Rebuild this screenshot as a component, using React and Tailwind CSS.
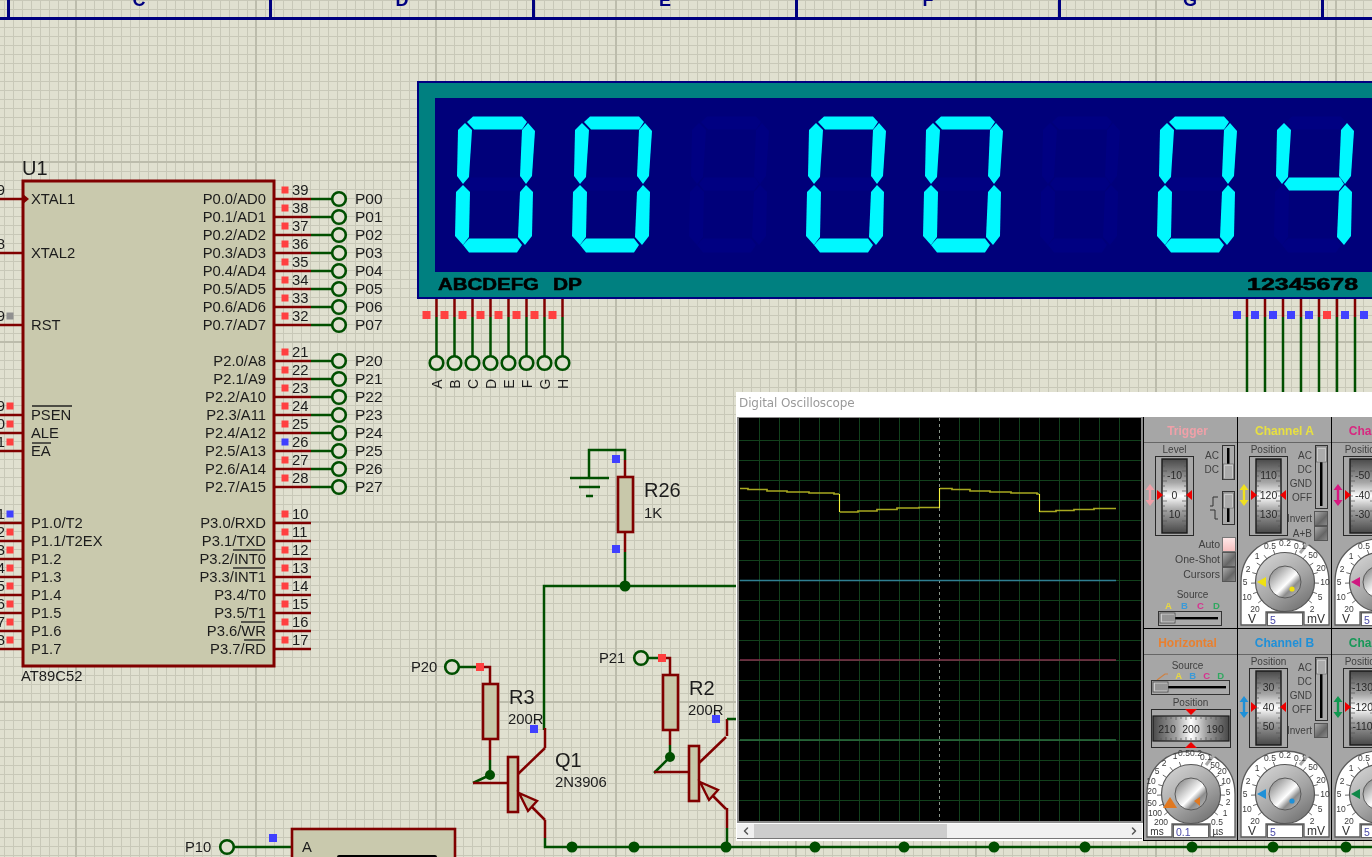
import { ChevronLeft, ChevronRight } from "lucide-react";

const MAROON = "#800000";
const GREEN = "#004f00";

const SEG = {
  a: "11,5 17,-0.5 66,-0.5 71,5 66,12.5 18,12.5",
  f: "9,6 16,13 13,60 7,67 1,59 2,13",
  b: "72,6 79,14 76,59 70,67 64,59 66,13",
  g: "9,67 14,60.5 65,60.5 69,67 64,73.5 14,73.5",
  e: "7,68 14,75 13,120 7,128 -1,119 0,75",
  c: "70,68 77,75 76,119 69,128 62,120 64,75",
  d: "7,128 13,121.5 61,121.5 66,128 61,135.5 13,135.5",
};

const left = [
  { y: 199, t: "XTAL1", n: "19" },
  { y: 253, t: "XTAL2", n: "18" },
  { y: 325, t: "RST", n: "9", c: "#909090" },
  { y: 415, t: "PSEN", n: "29", c: "#ff4040" },
  { y: 433, t: "ALE", n: "30", c: "#ff4040" },
  { y: 451, t: "EA", n: "31", c: "#ff4040" },
  { y: 523, t: "P1.0/T2", n: "1", c: "#4040ff" },
  { y: 541, t: "P1.1/T2EX", n: "2", c: "#ff4040" },
  { y: 559, t: "P1.2", n: "3", c: "#ff4040" },
  { y: 577, t: "P1.3", n: "4", c: "#ff4040" },
  { y: 595, t: "P1.4", n: "5", c: "#ff4040" },
  { y: 613, t: "P1.5", n: "6", c: "#ff4040" },
  { y: 631, t: "P1.6", n: "7", c: "#ff4040" },
  { y: 649, t: "P1.7", n: "8", c: "#ff4040" },
];

const right = [
  ["P0.0/AD0", 39, "P00"],
  ["P0.1/AD1", 38, "P01"],
  ["P0.2/AD2", 37, "P02"],
  ["P0.3/AD3", 36, "P03"],
  ["P0.4/AD4", 35, "P04"],
  ["P0.5/AD5", 34, "P05"],
  ["P0.6/AD6", 33, "P06"],
  ["P0.7/AD7", 32, "P07"],
  null,
  ["P2.0/A8", 21, "P20"],
  ["P2.1/A9", 22, "P21"],
  ["P2.2/A10", 23, "P22"],
  ["P2.3/A11", 24, "P23"],
  ["P2.4/A12", 25, "P24"],
  ["P2.5/A13", 26, "P25"],
  ["P2.6/A14", 27, "P26"],
  ["P2.7/A15", 28, "P27"],
  null,
  ["P3.0/RXD", 10],
  ["P3.1/TXD", 11],
  ["P3.2/INT0", 12],
  ["P3.3/INT1", 13],
  ["P3.4/T0", 14],
  ["P3.5/T1", 15],
  ["P3.6/WR", 16],
  ["P3.7/RD", 17],
];

const overlines = [
  [32, 72, 406],
  [32, 51, 443],
  [233, 265, 550],
  [233, 265, 568],
  [241, 265, 622],
  [244, 265, 640],
];

const busNodes = [572, 634, 726, 815, 904, 994, 1085, 1192, 1273, 1346];
const sheetLetters = [
  ["C", 139],
  ["D", 402],
  ["E", 665],
  ["F", 928],
  ["G", 1190],
];

function Wire({ d, c = GREEN, w = 2.5 }) {
  return <path d={d} fill="none" stroke={c} strokeWidth={w} />;
}

function Sq({ x, y, c = "#ff4040", s = 8 }) {
  return <rect x={x - s / 2} y={y - s / 2} width={s} height={s} fill={c} />;
}

function Term({ x, y }) {
  return <circle cx={x} cy={y} r="6.8" fill="#e0e0d0" stroke={GREEN} strokeWidth="2.6" />;
}

function Label({ x, y, s = 14.8, a, children }) {
  return (
    <text x={x} y={y} fontSize={s} textAnchor={a} fill="#1c1c1c">
      {children}
    </text>
  );
}

function Resistor({ x, y }) {
  return <rect x={x - 7} y={y} width={15} height={55} fill="#c8c8aa" stroke={MAROON} strokeWidth="2.6" />;
}

function Transistor({ x, y }) {
  // x,y = top left of the body
  return (
    <g>
      <Wire c={MAROON} d={`M${x + 10} ${y + 17}L${x + 37} ${y - 9}`} />
      <Wire c={MAROON} d={`M${x - 35} ${y + 26}H${x}`} />
      <Wire c={MAROON} d={`M${x + 24} ${y + 50}L${x + 37} ${y + 63}`} />
      <rect x={x} y={y} width={10} height={55} fill="#c8c8aa" stroke={MAROON} strokeWidth="2.6" />
      <polygon
        points={`${x + 11},${y + 36} ${x + 29},${y + 44} ${x + 20},${y + 54}`}
        fill="#c8c8aa"
        stroke={MAROON}
        strokeWidth="2.4"
      />
    </g>
  );
}

function Schematic() {
  return (
    <svg className="absolute left-0 top-0" width="1372" height="857" viewBox="0 0 1372 857">
      {/* sheet border */}
      <rect x="0" y="17" width="1372" height="3" fill="#000080" />
      {[8, 270, 533, 796, 1059, 1322].map((x) => (
        <rect key={x} x={x - 1} y="0" width="3" height="18" fill="#000080" />
      ))}
      {sheetLetters.map(([t, x]) => (
        <text key={t} x={x} y="6" fontSize="18" fontWeight="700" textAnchor="middle" fill="#000080">
          {t}
        </text>
      ))}

      {/* U1 */}
      {left.map((p) => (
        <g key={p.t}>
          <Wire c={MAROON} d={`M0 ${p.y}H23`} />
          <Label x={5} y={p.y - 4} a="end">
            {p.n}
          </Label>
          {p.c && <Sq x={10} y={p.y - 9} c={p.c} s={7} />}
        </g>
      ))}
      <rect x="23" y="181" width="251" height="485" fill="#c9c9ad" stroke={MAROON} strokeWidth="3" />
      <polygon points="23,194 29,199 23,204" fill={MAROON} />
      <Label x={22} y={175} s={20}>
        U1
      </Label>
      <Label x={21} y={681}>
        AT89C52
      </Label>
      {left.map((p) => (
        <Label key={p.t} x={31} y={p.y + 5}>
          {p.t}
        </Label>
      ))}
      {right.map((p, i) => {
        if (!p) return null;
        const y = 199 + i * 18;
        return (
          <g key={p[0]}>
            <Label x={266} y={y + 5} a="end">
              {p[0]}
            </Label>
            <Wire c={MAROON} d={`M274 ${y}H311`} />
            <Sq x={285} y={y - 9} s={7} c={p[1] === 26 ? "#4040ff" : "#ff4040"} />
            <Label x={292} y={y - 4}>
              {p[1]}
            </Label>
            {p[2] && (
              <>
                <Wire d={`M311 ${y}H333`} />
                <Term x={339} y={y} />
                <Label x={355} y={y + 5} s={15.5}>
                  {p[2]}
                </Label>
              </>
            )}
          </g>
        );
      })}
      {overlines.map(([a, b, y]) => (
        <path key={y} d={`M${a} ${y}H${b}`} stroke="#222" strokeWidth="1.4" />
      ))}

      {/* display pins */}
      {"ABCDEFGH".split("").map((t, i) => {
        const x = 436.5 + i * 18;
        return (
          <g key={t}>
            <Wire c={MAROON} d={`M${x} 298V317`} />
            <Wire d={`M${x} 317V357`} />
            <Sq x={x - 10} y={315} />
            <Term x={x} y={363} />
            <text x={x + 5} y="384" fontSize="14" textAnchor="middle" fill="#1c1c1c" transform={`rotate(-90 ${x + 5} 384)`}>
              {t}
            </text>
          </g>
        );
      })}
      {[1247, 1265, 1283, 1301, 1319, 1337, 1355].map((x, i) => (
        <g key={x}>
          <Wire c={MAROON} d={`M${x} 298V317`} />
          <Wire d={`M${x} 317V392`} />
          <Sq x={x - 10} y={315} c={i === 5 ? "#ff4040" : "#4040ff"} />
        </g>
      ))}
      <Sq x={1364} y={315} c="#4040ff" />

      {/* R26 */}
      <Wire d="M625 460V450H589V478" />
      <Wire d="M570 478H609" />
      <Wire d="M579 487H600" />
      <Wire d="M586 496H593" />
      <Wire c={MAROON} d="M625 460V477" />
      <Wire c={MAROON} d="M625 532V552" />
      <Resistor x={625} y={477} />
      <Wire d="M625 552V586M740 586H544V730" />
      <circle cx="625" cy="586" r="5.5" fill={GREEN} />
      <Sq x={616} y={459} c="#4040ff" />
      <Sq x={616} y={549} c="#4040ff" />
      <Label x={644} y={497} s={20}>
        R26
      </Label>
      <Label x={644} y={518}>
        1K
      </Label>

      {/* Q1 */}
      <Term x={452} y={667} />
      <Label x={411} y={672}>
        P20
      </Label>
      <Wire d="M459 667H482" />
      <Wire c={MAROON} d="M482 667H490V684M490 739V760" />
      <Sq x={480} y={667} />
      <Resistor x={490} y={684} />
      <Wire d="M490 760V775L473 783" />
      <circle cx="490" cy="775" r="5" fill={GREEN} />
      <Wire c={MAROON} d="M545 728V748" />
      <Wire c={MAROON} d="M545 820V838" />
      <Transistor x={508} y={757} />
      <Sq x={534} y={729} c="#4040ff" />
      <Label x={509} y={704} s={20}>
        R3
      </Label>
      <Label x={508} y={724}>
        200R
      </Label>
      <Label x={555} y={767} s={20}>
        Q1
      </Label>
      <Label x={555} y={787}>
        2N3906
      </Label>

      {/* Q2 */}
      <Term x={641} y={658} />
      <Label x={599} y={663}>
        P21
      </Label>
      <Wire d="M648 658H662" />
      <Wire c={MAROON} d="M662 658H670V675M670 730V745" />
      <Sq x={662} y={658} />
      <Resistor x={670} y={675} />
      <Wire d="M670 745V757L654 773" />
      <circle cx="670" cy="757" r="5" fill={GREEN} />
      <Wire c={MAROON} d="M727 736V719" />
      <Wire d="M727 719H740" />
      <Wire c={MAROON} d="M727 808V828" />
      <Transistor x={689} y={746} />
      <Sq x={716} y={719} c="#4040ff" />
      <Label x={689} y={695} s={20}>
        R2
      </Label>
      <Label x={688} y={715}>
        200R
      </Label>

      {/* bus along the bottom */}
      <Wire d="M545 838V847H1372M727 828V847" />
      {busNodes.map((x) => (
        <circle key={x} cx={x} cy="847" r="5.5" fill={GREEN} />
      ))}

      {/* lower chip */}
      <Wire d="M234 847H292" c={GREEN} />
      <Term x={227} y={847} />
      <Label x={185} y={852}>
        P10
      </Label>
      <Sq x={273} y={838} c="#4040ff" />
      <rect x="292" y="829" width="163" height="40" fill="#c9c9ad" stroke={MAROON} strokeWidth="2.6" />
      <Label x={302} y={852}>
        A
      </Label>
      <rect x="337" y="855" width="100" height="10" rx="2" fill="#000" />
    </svg>
  );
}

function Digit({ on }) {
  return (
    <svg width="117" height="140" viewBox="0 0 117 140" className="shrink-0 overflow-visible">
      {Object.entries(SEG).map(([k, pts]) => (
        <polygon key={k} points={pts} fill={on.includes(k) ? "#00f8ff" : "#000082"} />
      ))}
    </svg>
  );
}

function Display() {
  const digits = ["abcdef", "abcdef", "", "abcdef", "abcdef", "", "abcdef", "fgbc"];
  return (
    <div className="absolute left-[417px] top-[81px] h-[218px] w-[1000px] border-[2px] border-[#000080] bg-[#008080]">
      <div className="ml-[16px] mt-[15px] flex h-[174px] bg-[#00007a] pl-[21px] pt-[19px]">
        {digits.map((d, i) => (
          <Digit key={i} on={d} />
        ))}
      </div>
      <svg width="1000" height="26" className="block">
        <g fontSize="16" fontWeight="700" fill="#000" stroke="#000" strokeWidth="0.5">
          <text x="19" y="18" textLength="101" lengthAdjust="spacingAndGlyphs">
            ABCDEFG
          </text>
          <text x="134" y="18" textLength="29" lengthAdjust="spacingAndGlyphs">
            DP
          </text>
          <text x="828" y="18" textLength="111" lengthAdjust="spacingAndGlyphs">
            12345678
          </text>
        </g>
      </svg>
    </div>
  );
}

function ScopeScreen() {
  const vs = Array.from({ length: 19 }, (_, i) => 20 + i * 20);
  const hs = Array.from({ length: 19 }, (_, i) => 22 + i * 20);
  const pts = [
    "1,70.5 9,70.5 9,71.5 28,71.5 28,73 48,73 48,74 70,74 70,75 95,75 95,76 100,76",
    "101,94 119,94 119,93 138,93 138,91.5 158,91.5 158,90 180,90 180,89.5 201,89.5",
    "201,70.5 213,70.5 213,71.5 231,71.5 231,73 251,73 251,74 272,74 272,75 298,75 298,76 300,76",
    "301,93.5 317,93.5 317,92.5 335,92.5 335,91.5 355,91.5 355,90.5 377,90.5",
  ];
  return (
    <svg width="402" height="403" viewBox="0 0 402 403" className="block bg-black">
      {vs.map((x) =>
        x === 200 ? null : <path key={x} d={`M${x + 0.5} 0V403`} stroke="#12401c" strokeWidth="1" />
      )}
      {hs.map((y) => (
        <path key={y} d={`M0 ${y + 0.5}H402`} stroke="#12401c" strokeWidth="1" />
      ))}
      <path d="M200.5 0V403" stroke="#b8c8b8" strokeWidth="1" strokeDasharray="3 3" opacity="0.75" />
      <path d="M1 162.5H377" stroke="#2f7f92" strokeWidth="1.5" />
      <path d="M1 242H377" stroke="#85304c" strokeWidth="1.5" />
      <path d="M1 322H377" stroke="#2c7040" strokeWidth="1.5" />
      {pts.map((p, i) => (
        <polyline key={i} points={p} fill="none" stroke="#a8a820" strokeWidth="1.7" />
      ))}
      <path d="M100.5 76V94M200.5 70V90M300.5 76V94" stroke="#f4f440" strokeWidth="1.1" />
    </svg>
  );
}

function Drum({ vals }) {
  return (
    <svg width="39" height="80" viewBox="0 0 39 80" className="block">
      <defs>
        <linearGradient id="drumV" x1="0" x2="0" y1="0" y2="1">
          <stop offset="0" stopColor="#4a4a4a" />
          <stop offset="0.32" stopColor="#a8a8a8" />
          <stop offset="0.5" stopColor="#ffffff" />
          <stop offset="0.7" stopColor="#a0a0a0" />
          <stop offset="1" stopColor="#484848" />
        </linearGradient>
      </defs>
      <rect x="0.5" y="0.5" width="38" height="79" fill="#a8a8a8" stroke="#2a2a2a" />
      <rect x="7" y="3" width="25" height="74" fill="url(#drumV)" stroke="#1a1a1a" strokeWidth="1.4" />
      {[...Array(15)].map((_, i) => (
        <g key={i} stroke="#555" strokeWidth="0.7">
          <path d={`M8 ${5 + i * 5}h${i % 2 ? 2 : 4}M31 ${5 + i * 5}h-${i % 2 ? 2 : 4}`} />
        </g>
      ))}
      {vals.map((v, i) => (
        <text key={v} x="19.5" y={23 + i * 19.5} fontSize="10.5" textAnchor="middle" fill="#2a2a2a">
          {v}
        </text>
      ))}
      <polygon points="2,34 8,39 2,44" fill="#ee0000" />
      <polygon points="37,34 31,39 37,44" fill="#ee0000" />
    </svg>
  );
}

function HDrum() {
  return (
    <svg width="80" height="39" viewBox="0 0 80 39" className="block">
      <defs>
        <linearGradient id="drumH" x1="0" x2="1" y1="0" y2="0">
          <stop offset="0" stopColor="#4a4a4a" />
          <stop offset="0.32" stopColor="#a8a8a8" />
          <stop offset="0.5" stopColor="#ffffff" />
          <stop offset="0.7" stopColor="#a0a0a0" />
          <stop offset="1" stopColor="#484848" />
        </linearGradient>
      </defs>
      <rect x="0.5" y="0.5" width="79" height="38" fill="#a8a8a8" stroke="#2a2a2a" />
      <rect x="2" y="7" width="76" height="25" fill="url(#drumH)" stroke="#1a1a1a" strokeWidth="1.2" />
      {[...Array(15)].map((_, i) => (
        <path key={i} d={`M${5 + i * 5} 8v${i % 2 ? 2 : 3}M${5 + i * 5} 31v-${i % 2 ? 2 : 3}`} stroke="#555" strokeWidth="0.7" />
      ))}
      {["210", "200", "190"].map((v, i) => (
        <text key={v} x={16 + i * 24} y="23.5" fontSize="10.5" textAnchor="middle" fill="#2a2a2a">
          {v}
        </text>
      ))}
      <polygon points="34,0 46,0 40,6" fill="#ee0000" />
      <polygon points="34,39 46,39 40,33" fill="#ee0000" />
    </svg>
  );
}

function VArrow({ c }) {
  return (
    <svg width="10" height="24" viewBox="0 0 10 24" className="block">
      <path d="M5 1L9.5 7H6.2V17H9.5L5 23L.5 17H3.8V7H.5Z" fill={c} />
    </svg>
  );
}

function VSlider({ h, up = false }) {
  return (
    <svg width="13" height={h} viewBox={`0 0 13 ${h}`} className="block shrink-0">
      <rect x="0.5" y="0.5" width="12" height={h - 1} fill="#aaa" stroke="#333" />
      <rect x="5" y="3" width="2.5" height={h - 6} fill="#000" />
      <g transform={`translate(0 ${up ? 1 : h - 17})`}>
        <rect x="1.5" y="1" width="10" height="15" fill="#c8c8c8" stroke="#666" strokeWidth="0.7" />
        {[4, 6, 8, 10, 12, 14].map((y) => (
          <path key={y} d={`M3 ${y}H10`} stroke="#777" strokeWidth="0.7" />
        ))}
      </g>
    </svg>
  );
}

function HSlider({ w }) {
  return (
    <svg width={w} height="15" viewBox={`0 0 ${w} 15`} className="block">
      <rect x="0.5" y="0.5" width={w - 1} height="14" fill="#aaa" stroke="#333" />
      <rect x="4" y="6" width={w - 8} height="2.4" fill="#000" />
      <rect x="2" y="2" width="15" height="10" fill="#ccc" stroke="#444" strokeWidth="0.8" />
      {[5, 7, 9, 11, 13, 15].map((x) => (
        <path key={x} d={`M${x} 3.5V10.5`} stroke="#444" strokeWidth="0.8" />
      ))}
    </svg>
  );
}

function Btn({ pink }) {
  return (
    <div
      className={
        pink
          ? "h-[15px] w-[14px] shrink-0 border border-[#777] bg-[linear-gradient(to_bottom,#ffe8e8,#f8c0c0)]"
          : "h-[15px] w-[14px] shrink-0 border border-[#555] bg-[linear-gradient(135deg,#aaa,#666_60%,#888)]"
      }
    />
  );
}

const vScale = [
  ["0.5", 30, 11],
  ["0.2", 45, 8],
  ["0.1", 60, 11],
  ["1", 17, 21],
  ["2", 8, 34],
  ["5", 5, 47],
  ["10", 7, 62],
  ["20", 15, 74],
  ["50", 73, 20],
  ["20", 81, 33],
  ["10", 85, 47],
  ["5", 80, 62],
  ["2", 72, 74],
];

const tScale = [
  ["1", 29, 9],
  ["0.5", 38, 6],
  ["0.2", 50, 6],
  ["0.1", 60, 10],
  ["2", 18, 16],
  ["5", 11, 24],
  ["10", 5, 34],
  ["20", 6, 44],
  ["50", 6, 56],
  ["100", 9, 66],
  ["200", 15, 75],
  ["50", 69, 18],
  ["20", 76, 24],
  ["10", 80, 34],
  ["5", 82, 45],
  ["2", 82, 55],
  ["1", 79, 66],
  ["0.5", 71, 75],
];

function Knob({ color, value, scale = vScale, units = ["V", "mV"], time }) {
  const ticks = [-128, -110, -92, -74, -56, -38, -20, 20, 38, 56, 74, 92, 110, 128];
  return (
    <svg width="90" height="88" viewBox="0 0 90 88" className="block">
      <defs>
        <linearGradient id="knobBody" x1="0.15" y1="0" x2="0.85" y2="1">
          <stop offset="0" stopColor="#d4d4d4" />
          <stop offset="0.55" stopColor="#a4a4a4" />
          <stop offset="1" stopColor="#6e6e6e" />
        </linearGradient>
        <linearGradient id="knobCap" x1="0" y1="0" x2="1" y2="1">
          <stop offset="0" stopColor="#6e6e6e" />
          <stop offset="0.4" stopColor="#d8d8d8" />
          <stop offset="0.55" stopColor="#ffffff" />
          <stop offset="0.7" stopColor="#8c8c8c" />
          <stop offset="1" stopColor="#c8c8c8" />
        </linearGradient>
      </defs>
      <path
        d="M1 87V44C1 18 20 1 45 1C70 1 89 18 89 44V87H64V74H26V87Z"
        fill="#fff"
        stroke="#5a5a5a"
        strokeWidth="1.3"
      />
      <path d="M60 15L68 5" stroke="#a8a8a8" strokeWidth="3" />
      {ticks.map((a) => {
        const r = (a * Math.PI) / 180;
        return (
          <path
            key={a}
            d={`M${45 + 29 * Math.sin(r)} ${44 - 29 * Math.cos(r)}L${45 + 34 * Math.sin(r)} ${44 - 34 * Math.cos(r)}`}
            stroke="#444"
            strokeWidth="0.8"
          />
        );
      })}
      {scale.map(([t, x, y], i) => (
        <text key={i} x={x} y={y} fontSize="8.5" textAnchor="middle" fill="#3c3c3c">
          {t}
        </text>
      ))}
      <text x={time ? 11 : 12} y="85" fontSize={time ? 10 : 12} textAnchor="middle" fill="#333">
        {units[0]}
      </text>
      <text x={time ? 72 : 76} y="85" fontSize={time ? 10 : 12} textAnchor="middle" fill="#333">
        {units[1]}
      </text>
      <circle cx="45" cy="44" r="29.5" fill="url(#knobBody)" stroke="#555" strokeWidth="1.2" />
      <circle cx="45" cy="44" r="16" fill="url(#knobCap)" stroke="#5a5a5a" strokeWidth="1" />
      {time ? (
        <>
          <polygon points="24,47 31,58 17,58" fill={color} />
          <polygon points="54,47 48,51 54,56" fill={color} />
        </>
      ) : (
        <>
          <polygon points="17,44 26,39 26,49" fill={color} />
          <circle cx="52" cy="51" r="2.6" fill={color} />
        </>
      )}
      <rect x="27.5" y="75" width="35" height="12.5" fill="#fff" stroke="#444" strokeWidth="0.8" />
      <text x="30" y="85.5" fontSize="10.5" fill="#4a4aa8">
        {value}
      </text>
    </svg>
  );
}

function Title({ c, children }) {
  return (
    <div className={`flex h-[26px] shrink-0 items-center justify-center border-b border-[#666] pt-[2px] text-[12px] font-bold ${c}`}>
      {children}
    </div>
  );
}

function Channel({ title, titleClass, arrow, vals, knob, aPlusB }) {
  return (
    <div className="flex h-[212px] w-[94px] shrink-0 flex-col border-r border-b border-black bg-[#a6a6a6] text-[10px] leading-none text-[#404040]">
      <Title c={titleClass}>{title}</Title>
      <div className="flex h-[95px]">
        <div className="flex w-[11px] justify-center pt-[40px]">
          <VArrow c={arrow} />
        </div>
        <div className="w-[39px]">
          <div className="flex h-[13px] items-center justify-center">Position</div>
          <Drum vals={vals} />
        </div>
        <div className="flex w-[40px] flex-col pt-[2px]">
          <div className="flex h-[64px] justify-end gap-[3px]">
            <div className="flex flex-col pt-[4px] text-right">
              {["AC", "DC", "GND", "OFF"].map((t) => (
                <span key={t} className="flex h-[14px] items-center justify-end">
                  {t}
                </span>
              ))}
            </div>
            <VSlider h={64} up />
          </div>
          <div className="mt-[2px] flex h-[15px] items-center justify-end gap-[2px]">
            <span>Invert</span>
            <Btn />
          </div>
          {aPlusB && (
            <div className="flex h-[15px] items-center justify-end gap-[2px]">
              <span>A+B</span>
              <Btn />
            </div>
          )}
        </div>
      </div>
      <div className="ml-[2px]">
        <Knob color={knob} value="5" />
      </div>
    </div>
  );
}

function Trigger() {
  return (
    <div className="flex h-[212px] w-[94px] shrink-0 flex-col border-r border-b border-black bg-[#a6a6a6] text-[10px] leading-none text-[#404040]">
      <Title c="pr-[6px] text-[#f0a0a8]">Trigger</Title>
      <div className="flex h-[94px]">
        <div className="flex w-[11px] justify-center pt-[40px]">
          <VArrow c="#f0a0a8" />
        </div>
        <div className="w-[39px]">
          <div className="flex h-[13px] items-center justify-center">Level</div>
          <Drum vals={["-10", "0", "10"]} />
        </div>
        <div className="flex flex-1 flex-col items-end pr-[2px] pt-[2px]">
          <div className="flex h-[35px] gap-[3px]">
            <div className="flex flex-col pt-[4px]">
              <span className="flex h-[14px] items-center justify-end">AC</span>
              <span className="flex h-[14px] items-center justify-end">DC</span>
            </div>
            <VSlider h={35} />
          </div>
          <div className="mt-[11px] flex h-[34px] items-center gap-[3px]">
            <svg width="10" height="26" viewBox="0 0 10 26" className="block">
              <path d="M1 11H4V2H9M1 15H6V24H9" fill="none" stroke="#333" strokeWidth="1" />
            </svg>
            <VSlider h={34} up />
          </div>
        </div>
      </div>
      <div className="flex flex-col items-end pr-[1px]">
        {["Auto", "One-Shot", "Cursors"].map((t, i) => (
          <div key={t} className="flex h-[15px] items-center gap-[2px] text-[10.5px]">
            <span>{t}</span>
            <Btn pink={i === 0} />
          </div>
        ))}
      </div>
      <div className="mt-[7px] flex h-[12px] items-center justify-center pl-[4px]">Source</div>
      <div className="ml-[21px] flex h-[10px] w-[55px] items-center justify-between text-[9.5px] font-bold">
        <span className="text-[#e8d840]">A</span>
        <span className="text-[#3a9ad8]">B</span>
        <span className="text-[#d83090]">C</span>
        <span className="text-[#30a860]">D</span>
      </div>
      <div className="ml-[14px]">
        <HSlider w={64} />
      </div>
    </div>
  );
}

function Horizontal() {
  return (
    <div className="flex h-[212px] w-[94px] shrink-0 flex-col border-r border-b border-black bg-[#a6a6a6] text-[10px] leading-none text-[#404040]">
      <Title c="pr-[6px] text-[#e88030]">Horizontal</Title>
      <div className="mt-[5px] flex h-[12px] items-center justify-center pr-[6px]">Source</div>
      <div className="ml-[12px] flex h-[8px] w-[68px] items-center justify-between text-[9.5px] font-bold">
        <svg width="12" height="9" viewBox="0 0 12 9" className="block">
          <path d="M1 8L9 2H12" fill="none" stroke="#d08040" strokeWidth="1.2" />
        </svg>
        <span className="text-[#e8d840]">A</span>
        <span className="text-[#3a9ad8]">B</span>
        <span className="text-[#d83090]">C</span>
        <span className="text-[#30a860]">D</span>
      </div>
      <div className="ml-[7px]">
        <HSlider w={79} />
      </div>
      <div className="flex h-[14px] items-center justify-center pt-[2px]">Position</div>
      <div className="ml-[7px]">
        <HDrum />
      </div>
      <div className="ml-[2px] mt-[2px]">
        <Knob color="#e07820" value="0.1" scale={tScale} units={["ms", "µs"]} time />
      </div>
    </div>
  );
}

function Oscilloscope() {
  return (
    <div className="absolute left-[736px] top-[392px] flex h-[449px] w-[700px] flex-col bg-white">
      <div className="flex h-[25px] shrink-0 items-center pb-[3px] pl-[3px] [font-family:'DejaVu_Sans',sans-serif] text-[12px] tracking-[-0.1px] text-[#9a9a9a]">
        Digital Oscilloscope
      </div>
      <div className="flex flex-1">
        <div className="flex w-[407px] shrink-0 flex-col pl-[1px]">
          <div className="w-[406px] border-2 border-t border-r-[2px] border-[#8c8c8c]">
            <ScopeScreen />
          </div>
          <div className="mt-[1px] flex h-[15px] w-[405px] items-center border-b border-[#777] bg-[#f0f0f0] text-[#555]">
            <div className="flex h-full w-[17px] items-center justify-center">
              <ChevronLeft size={12} strokeWidth={3} />
            </div>
            <div className="h-full w-[193px] bg-[#cdcdcd]" />
            <div className="flex-1" />
            <div className="flex h-full w-[17px] items-center justify-center">
              <ChevronRight size={12} strokeWidth={3} />
            </div>
          </div>
        </div>
        <div className="flex flex-col border-l border-black">
          <div className="flex">
            <Trigger />
            <Channel
              title="Channel A"
              titleClass="text-[#e8e040]"
              arrow="#f0e020"
              vals={["110", "120", "130"]}
              knob="#efe010"
              aPlusB
            />
            <Channel
              title="Channel C"
              titleClass="text-[#d82880]"
              arrow="#d81880"
              vals={["-50", "-40", "-30"]}
              knob="#d01880"
              aPlusB
            />
          </div>
          <div className="flex">
            <Horizontal />
            <Channel
              title="Channel B"
              titleClass="text-[#2090d8]"
              arrow="#1e90d8"
              vals={["30", "40", "50"]}
              knob="#1e90d8"
            />
            <Channel
              title="Channel D"
              titleClass="text-[#189858]"
              arrow="#109850"
              vals={["-130", "-120", "-110"]}
              knob="#108848"
            />
          </div>
        </div>
      </div>
    </div>
  );
}

export default function App() {
  return (
    <div className="relative h-[857px] w-[1372px] overflow-hidden bg-[#e0e0d0] blur-[0.35px] [font-family:'Liberation_Sans',Arial,sans-serif] [background-image:linear-gradient(90deg,#bcbcac_2px,transparent_2px),linear-gradient(0deg,#bcbcac_1.5px,transparent_1.5px),linear-gradient(90deg,#c8c8b8_1px,transparent_1px),linear-gradient(0deg,#c8c8b8_1px,transparent_1px)] [background-size:180px_180px,180px_180px,9px_9px,9px_9px] [background-position:75px_0,0_163px,4px_0,0_1px]">
      <Schematic />
      <Display />
      <Oscilloscope />
    </div>
  );
}
